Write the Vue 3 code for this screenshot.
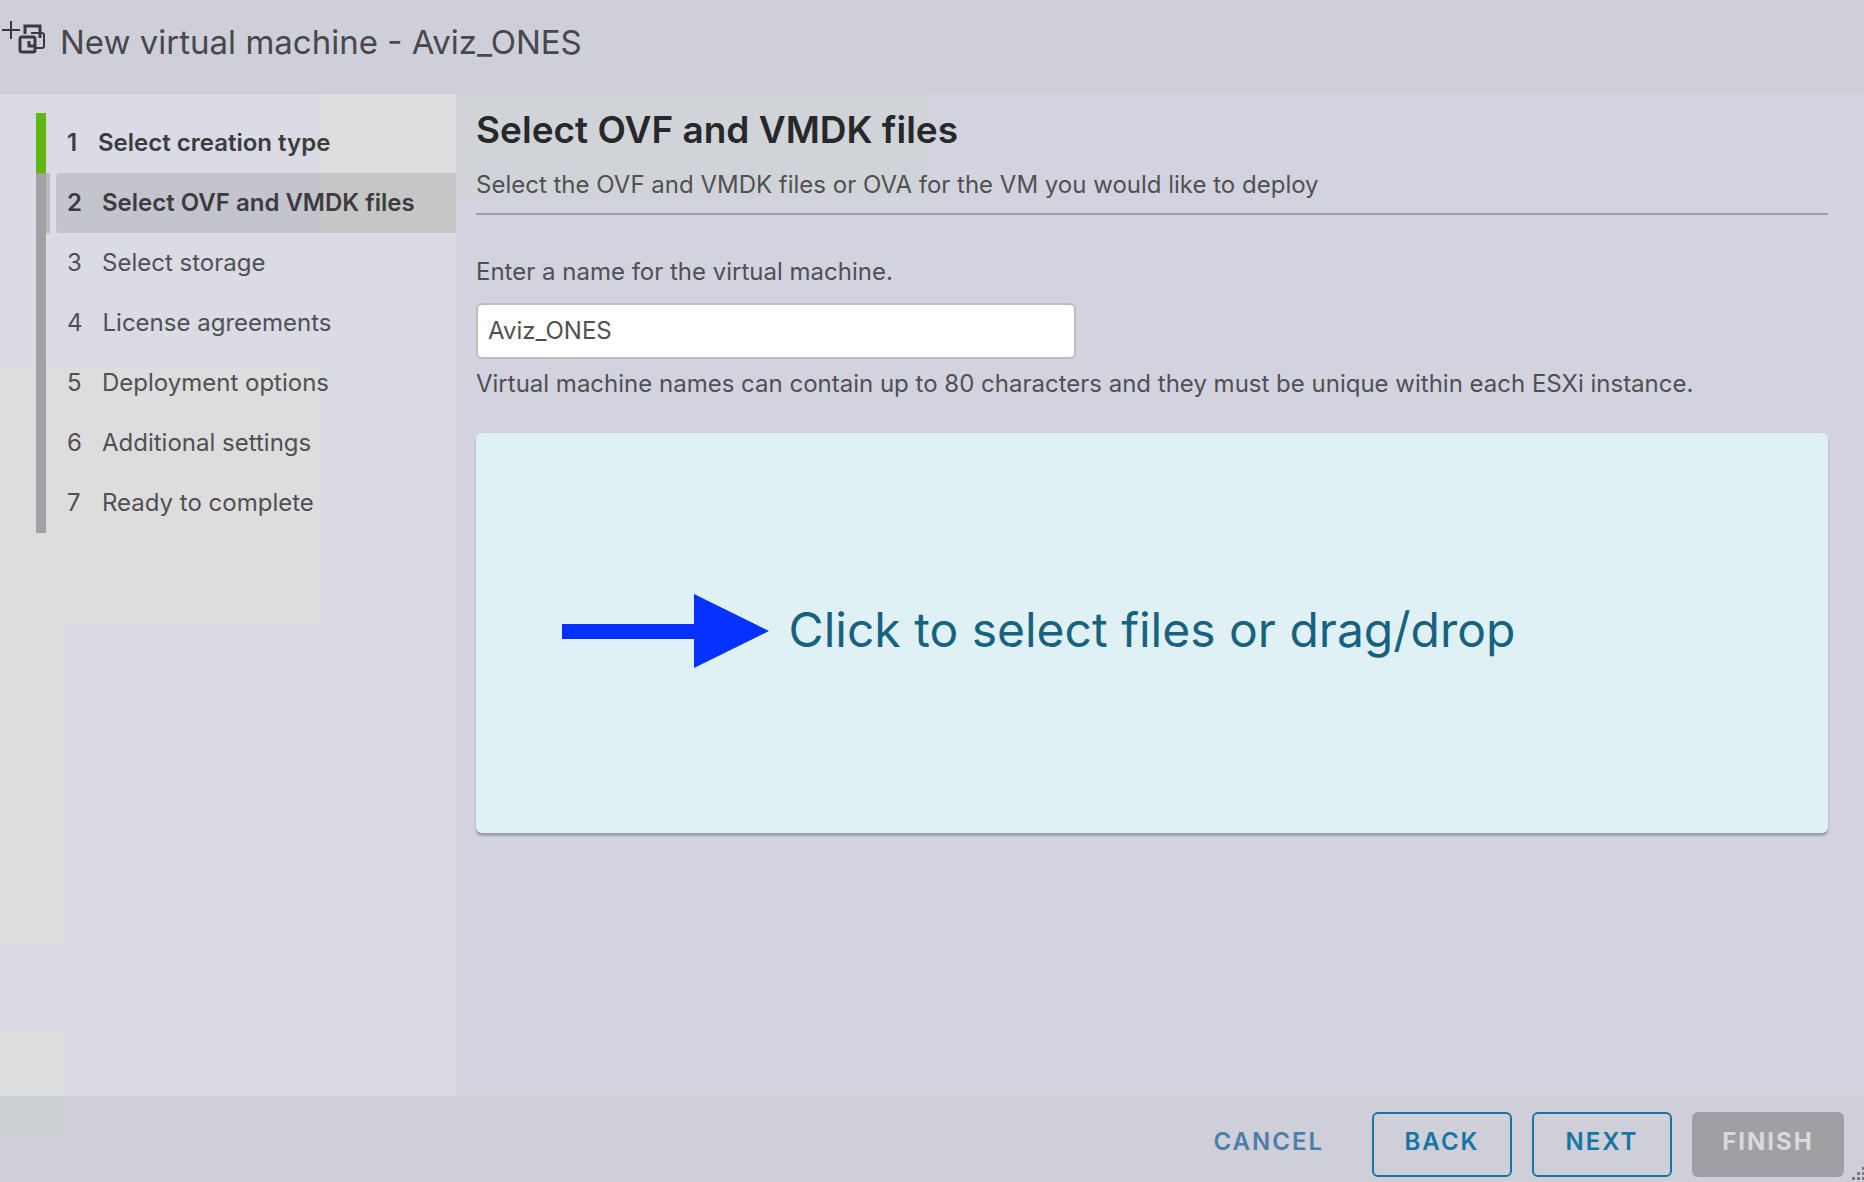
<template>
  <div class="wizard">
    <header class="wizard-header">
      <svg class="vm-icon" viewBox="0 2 48 48" aria-hidden="true">
        <path d="M2 14h18M11 5v18" stroke-width="2" />
        <path d="M25 18v-8h15v12" stroke-width="3" />
        <path d="M31 17h11q2 0 2 2v11q0 2-2 2h-7" stroke-width="2" />
        <path d="M29 25v5h5" stroke-width="3" />
        <rect x="20" y="21" width="15" height="15" rx="2" stroke-width="3" />
      </svg>
      <h1>New virtual machine - {{ vmName }}</h1>
    </header>

    <div class="wizard-body">
      <nav class="sidebar" aria-label="Wizard steps">
        <ol class="steps">
          <li v-for="(step, index) in steps" :key="step" :class="{ done: index < current, active: index === current }">
            <a href="#" @click.prevent="goTo(index)">
              <span class="step-number">{{ index + 1 }}</span>
              <span>{{ step }}</span>
            </a>
          </li>
        </ol>
      </nav>

      <main class="content">
        <h2>Select OVF and VMDK files</h2>
        <p class="subtitle">Select the OVF and VMDK files or OVA for the VM you would like to deploy</p>

        <label class="name-label" for="vm-name">Enter a name for the virtual machine.</label>
        <input id="vm-name" v-model="vmName" class="name-input" type="text" maxlength="80" />
        <p class="hint">Virtual machine names can contain up to 80 characters and they must be unique within each ESXi instance.</p>

        <button class="drop-zone" type="button">
          <span class="drop-text">
            <svg class="arrow" viewBox="0 0 207 74" aria-hidden="true">
              <path d="M0 30h132V0l75 37-75 37V45H0z" />
            </svg>
            Click to select files or drag/drop
          </span>
        </button>
      </main>
    </div>

    <footer class="wizard-footer">
      <button type="button" class="btn btn-link">CANCEL</button>
      <button type="button" class="btn btn-outline" @click="goTo(current - 1)">BACK</button>
      <button type="button" class="btn btn-outline" @click="goTo(current + 1)">NEXT</button>
      <button type="button" class="btn btn-finish" disabled>FINISH</button>
      <svg class="grip" viewBox="0 0 12 16" aria-hidden="true">
        <path d="M10 1h2v3h-2zM5 6h3v3H5zM10 6h2v3h-2zM0 11h3v3H0zM5 11h3v3H5zM10 11h2v3h-2z" />
      </svg>
    </footer>
  </div>
</template>

<script setup>
import { ref } from 'vue';

const vmName = ref('Aviz_ONES');
const current = ref(1);

const steps = [
  'Select creation type',
  'Select OVF and VMDK files',
  'Select storage',
  'License agreements',
  'Deployment options',
  'Additional settings',
  'Ready to complete',
];

const goTo = (index) => {
  if (index >= 0 && index < steps.length) {
    current.value = index;
  }
};
</script>

<style>
body {
  margin: 0;
}
</style>

<style scoped>
.wizard {
  display: flex;
  flex-direction: column;
  min-height: 100vh;
  background: #cfcfda;
  color: #505054;
  font-family: Inter, "Open Sans", sans-serif;
  font-size: 24px;
  line-height: 32px;
}
.wizard *,
.wizard {
  box-sizing: border-box;
}
.wizard-header {
  display: flex;
  align-items: center;
  gap: 12px;
  height: 94px;
  padding-bottom: 10px;
}
.wizard-header h1 {
  margin: 0;
  font-size: 33px;
  font-weight: 400;
  line-height: 40px;
  color: #48484c;
}
.vm-icon {
  width: 48px;
  height: 48px;
  fill: none;
  stroke: #3a3a3e;
}
.wizard-body {
  display: flex;
  flex: 1;
  background: #d3d3df;
}

/* sidebar, with its faint tinted tiles */
.sidebar {
  flex: none;
  width: 456px;
  padding: 19px 0 20px 36px;
  background:
    linear-gradient(#dddddd, #dddddd) 320px 0 / 136px 140px no-repeat,
    linear-gradient(#dddddd, #dddddd) 0 273px / 320px 256px no-repeat,
    linear-gradient(#dddddd, #dddddd) 0 529px / 66px 322px no-repeat,
    linear-gradient(#dddddd, #dddddd) 0 938px / 66px 66px no-repeat,
    #dbdbe5;
}
.steps {
  margin: 0;
  padding: 0;
  list-style: none;
}
.steps li {
  height: 60px;
  padding-left: 10px;
  border-left: 10px solid #a2a2a6;
}
.steps li.done {
  border-left-color: #5eb715;
}
.steps a {
  display: flex;
  align-items: center;
  gap: 20px;
  height: 60px;
  padding-left: 11px;
  border-radius: 4px 0 0 4px;
  color: #505054;
  text-decoration: none;
}
.steps li.done a,
.steps li.active a {
  font-weight: 600;
  color: #3c3c40;
}
.steps li.done a {
  gap: 16px;
}
.steps li.active {
  background: linear-gradient(#b9b9bf, #b9b9bf) 0 0 / 4px 60px no-repeat;
}
.steps li.active a {
  background: rgba(0, 0, 0, 0.1);
}
.step-number {
  min-width: 15px;
}

.content {
  display: flex;
  flex: 1;
  flex-direction: column;
  align-items: flex-start;
  padding: 12px 36px 20px 20px;
  background: linear-gradient(#d0d4d8, #d0d4d8) 0 0 / 474px 104px no-repeat;
}
.content h2 {
  margin: 0;
  font-size: 37px;
  font-weight: 600;
  line-height: 48px;
  color: #28282b;
}
.content p {
  margin: 0;
}
.content .subtitle {
  align-self: stretch;
  margin: 15px 0 41px;
  padding-bottom: 12px;
  border-bottom: 2px solid #a0a0ac;
}
.name-input {
  width: 600px;
  max-width: 100%;
  height: 56px;
  margin: 15px 0 9px;
  padding: 0 10px 2px;
  border: 2px solid #bdbdbd;
  border-radius: 6px;
  background: #ffffff;
  color: #505054;
  font: inherit;
}
.drop-zone {
  align-self: stretch;
  height: 400px;
  margin-top: 33px;
  padding: 0 0 6px;
  border: 0;
  border-radius: 6px;
  background: #e0f1f6;
  box-shadow: 0 3px 2px #9d9da8;
  color: #16627f;
  font: inherit;
  font-size: 48px;
  font-weight: 400;
  line-height: 60px;
  cursor: pointer;
}
.drop-text {
  position: relative;
}
.arrow {
  position: absolute;
  top: -6px;
  right: 100%;
  width: 207px;
  height: 74px;
  margin-right: 20px;
  fill: #0532ff;
}

.wizard-footer {
  position: relative;
  display: flex;
  justify-content: flex-end;
  gap: 20px;
  height: 86px;
  padding: 16px 20px 0 0;
  background: linear-gradient(#cbd0d4, #cbd0d4) 0 0 / 64px 42px no-repeat;
}
.btn {
  height: 65px;
  padding: 0 26px 6px;
  border: 2px solid transparent;
  border-radius: 6px;
  background: none;
  font: inherit;
  font-weight: 600;
  letter-spacing: 2px;
  cursor: pointer;
}
.btn-link {
  color: #4a7fa9;
}
.btn-outline {
  min-width: 140px;
  border-color: #1675a2;
  color: #1675a2;
}
.btn-finish {
  min-width: 152px;
  padding: 0 22px 6px;
  background: #9f9fa4;
  color: #dadade;
  font-weight: 700;
  cursor: default;
}
.grip {
  position: absolute;
  right: 0;
  bottom: 0;
  width: 12px;
  height: 16px;
  fill: #77777c;
}
</style>
